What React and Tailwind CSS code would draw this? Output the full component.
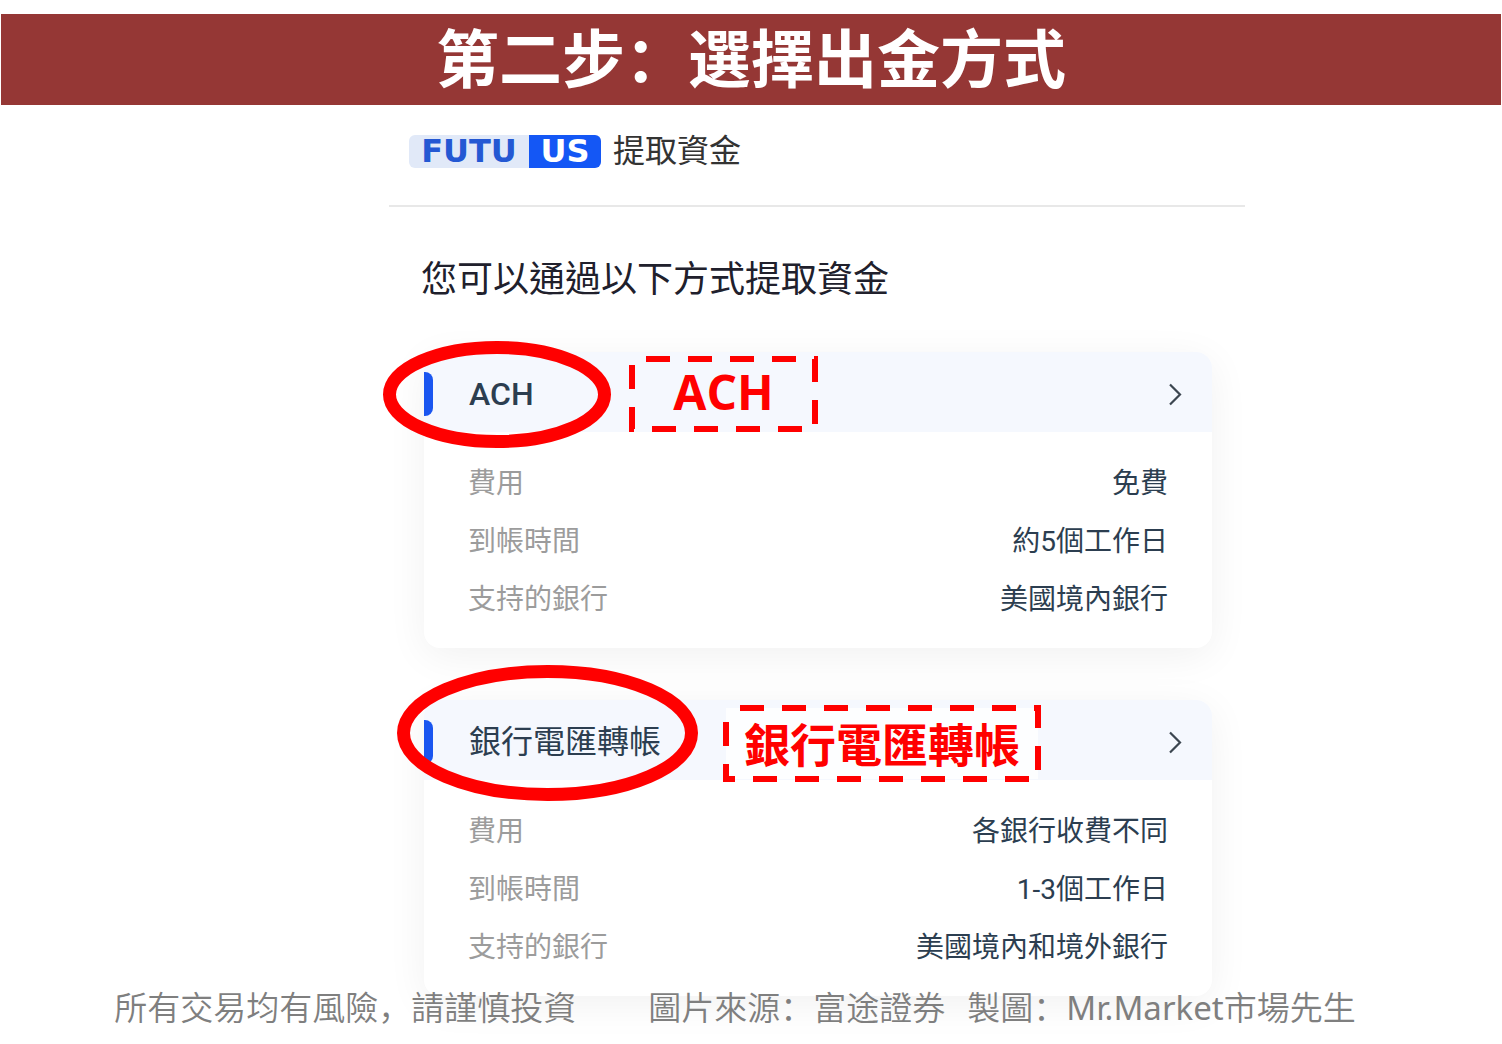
import React from 'react';

const methods = [
  {
    id: 'ach',
    name: 'ACH',
    rows: [
      { label: '費用', value: '免費' },
      { label: '到帳時間', value: '約5個工作日' },
      { label: '支持的銀行', value: '美國境內銀行' },
    ],
  },
  {
    id: 'wire',
    name: '銀行電匯轉帳',
    rows: [
      { label: '費用', value: '各銀行收費不同' },
      { label: '到帳時間', value: '1-3個工作日' },
      { label: '支持的銀行', value: '美國境內和境外銀行' },
    ],
  },
];

// Red ellipse drawn around a method name
function Ellipse({ className, width, height }) {
  return (
    <svg
      className={`absolute pointer-events-none ${className}`}
      width={width}
      height={height}
      viewBox={`0 0 ${width} ${height}`}
      fill="none"
      aria-hidden="true"
    >
      <ellipse
        cx={width / 2}
        cy={height / 2}
        rx={width / 2 - 6.5}
        ry={height / 2 - 6.5}
        stroke="#ff0000"
        strokeWidth="13"
      />
    </svg>
  );
}

// Dashed red frame with a caption inside
function Callout({ className, width, height, fill = 'none', children }) {
  return (
    <div className={`absolute pb-1 flex items-center justify-center pointer-events-none ${className}`}>
      <svg
        className="absolute inset-0"
        width={width}
        height={height}
        viewBox={`0 0 ${width} ${height}`}
        aria-hidden="true"
      >
        <rect
          x="3"
          y="3"
          width={width - 6}
          height={height - 6}
          fill={fill}
          stroke="#ff0000"
          strokeWidth="6"
          strokeDasharray="24 18"
          strokeDashoffset="-14"
        />
      </svg>
      <span className="relative font-bold text-[#ff0000] whitespace-nowrap">{children}</span>
    </div>
  );
}

function MethodCard({ name, nameClass, rows, children }) {
  return (
    <section className="relative rounded-2xl bg-white shadow-[0_8px_40px_rgba(0,0,0,0.06)]">
      {/* Card header */}
      <button
        type="button"
        className="w-full h-20 pt-1 pr-7 flex items-center rounded-t-2xl bg-[#f5f8fe] text-left"
      >
        <span className="w-[9px] h-11 rounded-r-lg bg-[#1a56f0]" />
        <span className={`ml-9 flex-1 text-[32px] leading-10 text-[#2c3e50] ${nameClass}`}>
          {name}
        </span>
        <svg className="w-[18px] h-6" viewBox="0 0 18 24" fill="none" stroke="#3c4650" strokeWidth="2.2">
          <path d="M4 2.5L14 12.5L4 22.5" />
        </svg>
      </button>

      {/* Details */}
      <dl className="pt-[23px] pb-[19px] px-11">
        {rows.map((row) => (
          <div key={row.label} className="h-[58px] flex items-center justify-between text-[28px] leading-10">
            <dt className="text-[#9c9c9c]">{row.label}</dt>
            <dd className="text-[#2c3e50]">{row.value}</dd>
          </div>
        ))}
      </dl>

      {children}
    </section>
  );
}

export default function App() {
  const [ach, wire] = methods;

  return (
    <div
      lang="zh-Hant"
      className="min-h-screen bg-white pt-3.5 overflow-x-hidden font-['Roboto','Noto_Sans_CJK_TC',sans-serif]"
    >
      {/* Banner */}
      <h1 className="mx-px h-[91px] pb-2.5 flex items-center justify-center bg-[#953735] text-white text-[63px] leading-none font-bold whitespace-nowrap font-['Noto_Sans_CJK_SC',sans-serif]">
        <span lang="zh-Hans">第二步：選擇出金方式</span>
      </h1>

      <div className="grid grid-cols-[389fr_856fr_257fr]">
        <main className="col-start-2">
          {/* Logo row */}
          <header className="h-[102px] pl-5 pb-2 flex items-center border-b-2 border-[#e8e8e8]">
            <div className="h-[33px] flex text-[32px] leading-[33px] font-bold font-['DejaVu_Sans',sans-serif]">
              <span className="w-[120px] text-center rounded-l-md bg-[#e1e9f8] text-[#2458d3]">FUTU</span>
              <span className="w-[72px] text-center rounded-r-md bg-[#1457f5] text-white">US</span>
            </div>
            <span className="ml-3 text-[32px] leading-10 text-[#333333]">提取資金</span>
          </header>

          <h2 className="h-[145px] pl-8 flex items-center text-[36px] text-[#20202c] whitespace-nowrap">
            您可以通過以下方式提取資金
          </h2>

          <div className="pl-[35px] pr-[33px] flex flex-col gap-[52px]">
            <MethodCard name={ach.name} nameClass="font-medium" rows={ach.rows}>
              <Ellipse className="-left-[41px] -top-[11px]" width={228} height={107} />
              <Callout
                className="left-[205px] top-1 w-[189px] h-[76px] text-[48px] leading-none font-['Open_Sans',sans-serif]"
                width={189}
                height={76}
              >
                ACH
              </Callout>
            </MethodCard>

            <MethodCard name={wire.name} nameClass="font-normal" rows={wire.rows}>
              <Ellipse className="-left-[27px] -top-[35px]" width={301} height={136} />
              <Callout
                className="left-[299px] top-[5px] w-[318px] h-[77px] text-[46px] leading-none font-['Noto_Sans_CJK_TC',sans-serif]"
                width={318}
                height={77}
                fill="#fdfeff"
              >
                銀行電匯轉帳
              </Callout>
            </MethodCard>
          </div>
        </main>
      </div>

      {/* Disclaimer and credits */}
      <footer
        lang="zh-Hans"
        className="relative pr-8 flex justify-center text-[33px] leading-5 font-[350] text-[#7f7f7f] whitespace-nowrap font-['Noto_Sans_CJK_SC',sans-serif]"
      >
        <span>所有交易均有風險，請謹慎投資</span>
        <span className="ml-[72px]">圖片來源：富途證券</span>
        <span className="ml-[22px]">
          製圖：<span className="font-normal font-['Noto_Sans',sans-serif]">Mr.Market</span>市場先生
        </span>
      </footer>
    </div>
  );
}
